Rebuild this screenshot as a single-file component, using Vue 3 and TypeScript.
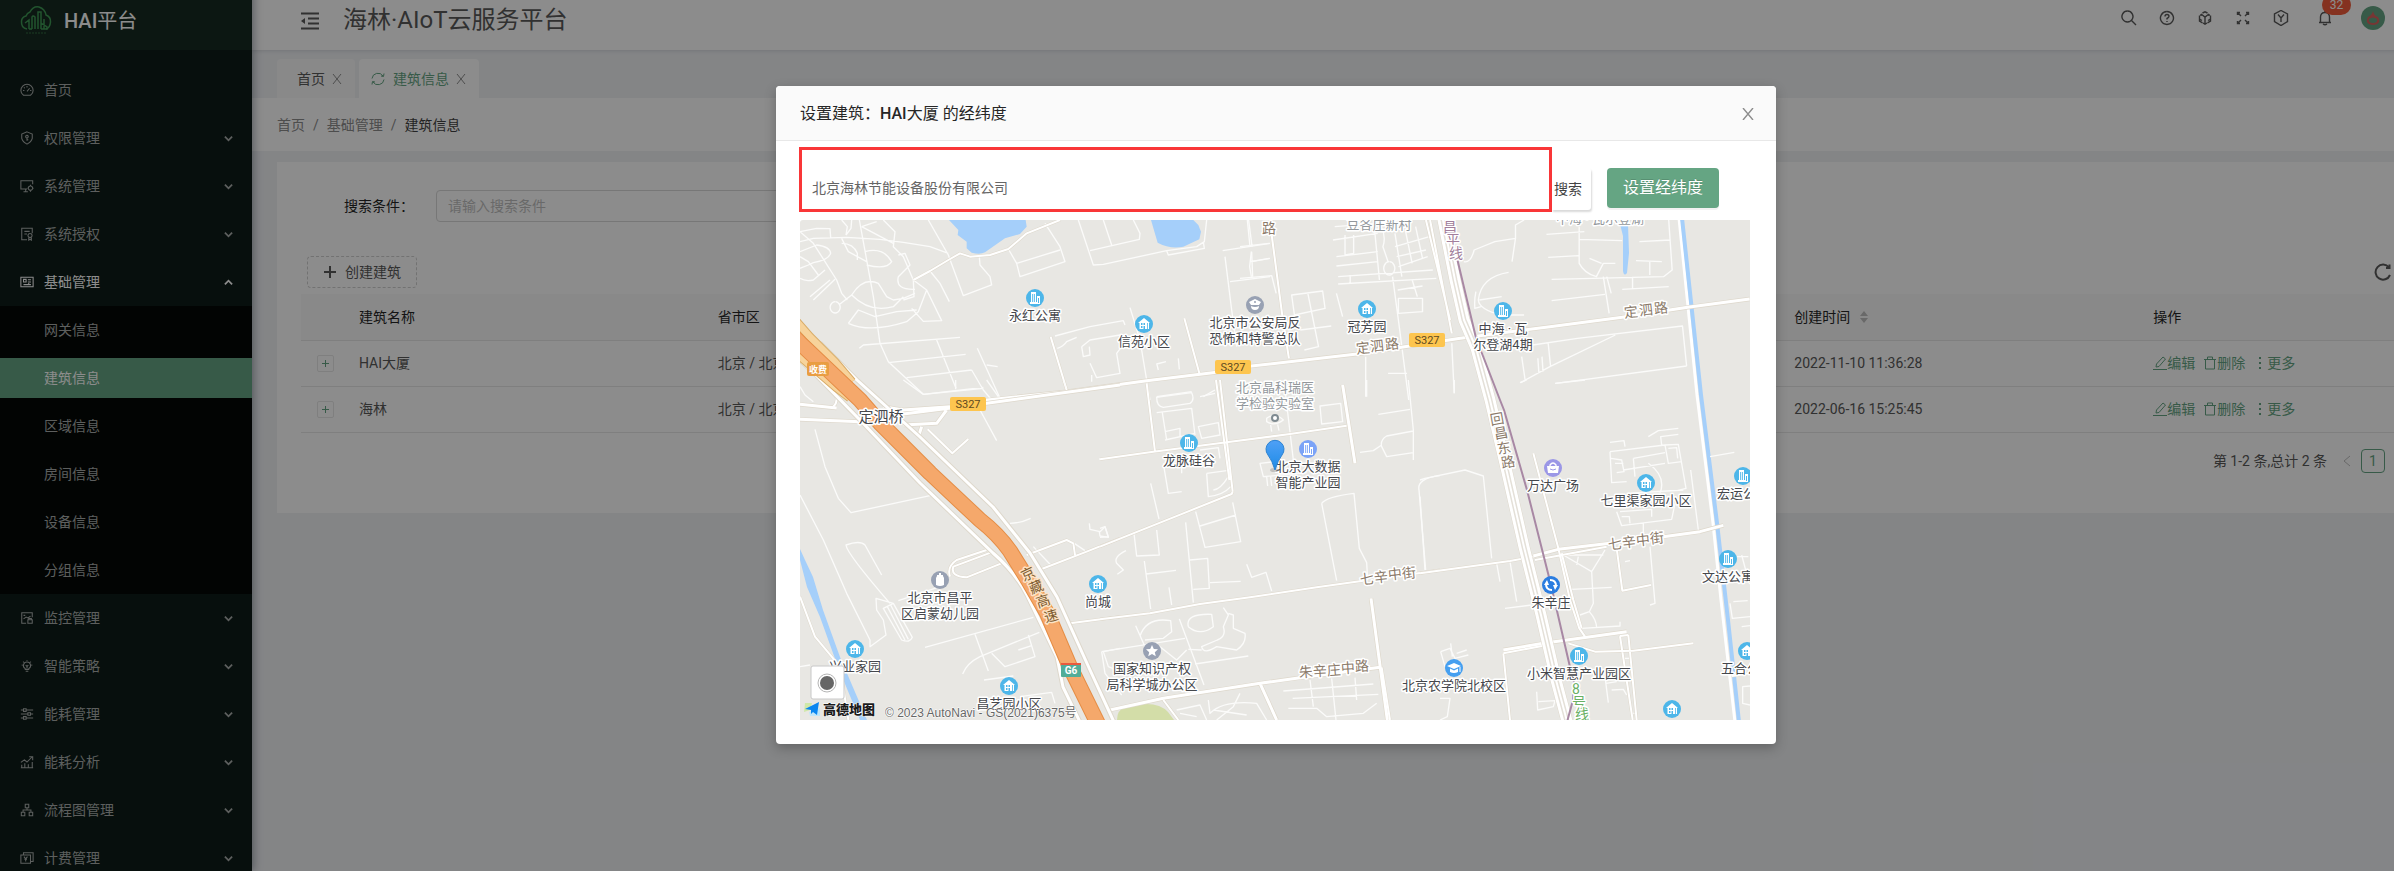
<script setup lang="ts">
import { ref } from 'vue'

interface MenuItem { label: string; icon: string; arrow: boolean; open?: boolean; children?: string[] }
interface Poi { x: number; y: number; kind: string; color: string; lines: string[] }
interface RoadName { color: string; halo: string; chars: [string, number, number, number][] }
interface Tile { transform: string; minor: string; medium: string; major: string }

const menu: MenuItem[] = [
  { label: '首页', icon: 'M4 14 Q1 12 1 8.500 A7 7 0 0 1 15 8.500 Q15 12 12 14 Z M8 9.500 L11 6 M3.500 8.500 H5 M11.500 8.500 H13 M4.500 5 L5.500 6 M8 3.500 V5', arrow: false },
  { label: '权限管理', icon: 'M8 1 L14 3.500 V8.500 Q13 12.500 8 15 Q3 12.500 2 8.500 V3.500 Z M8 5 A1.500 1.500 0 1 1 7.900 5 M8 8 V11 M8 10 H9.500', arrow: true },
  { label: '系统管理', icon: 'M8 11.500 H1 V2 H14.500 V6 M4 14.500 H9 M6.500 11.500 V14.500 M12 8 A2.500 2.500 0 1 1 11.900 8 M12 6.500 V8 M12 13 V14.500 M8.500 10.500 H9.500 M14.500 10.500 H15.500', arrow: true },
  { label: '系统授权', icon: 'M8 14.500 H2 V1.500 H14 V7 M5 5 H11 M5 8 H8 M11.500 7.500 A2.300 2.300 0 1 1 11.400 7.500 M10 12 V15 L11.500 14 L13 15 V12', arrow: true },
  {
    label: '基础管理', icon: 'M1 2.500 H15 V13.500 H1 Z M4 5 H7 V8 H4 Z M9 5.500 H12.500 M9 8 H12.500 M4 11 H12.500 M10 9 V11', arrow: true, open: true,
    children: ['网关信息', '建筑信息', '区域信息', '房间信息', '设备信息', '分组信息'],
  },
  { label: '监控管理', icon: 'M7 14 H2 V2 H14 V7 M4 5 H6 M4 9 L7 7 L9 8 L12 6 M9 10 H14 V14 H9 Z M10 10 V8.500 H13 V10', arrow: true },
  { label: '智能策略', icon: 'M8 3.500 A4 4 0 0 1 10 11 V12 H6 V11 A4 4 0 0 1 8 3.500 M6.500 14 H9.500 M8 8 V11 M6.500 7 L8 8.500 L9.500 7 M8 1 V2 M2 7 H3 M13 7 H14 M3.500 3 L4.500 4 M12.500 3 L11.500 4', arrow: true },
  { label: '能耗管理', icon: 'M1 3.500 H4 M7 3.500 H15 M4 2 H7 V5 H4 Z M1 8 H9 M12 8 H15 M9 6.500 H12 V9.500 H9 Z M1 12.500 H4 M7 12.500 H15 M4 11 H7 V14 H4 Z', arrow: true },
  { label: '能耗分析', icon: 'M1 8.500 L5 5.500 L8 8 L14 2 M10.500 2 H14.500 V6 M2 14 V11 M5.500 14 V9.500 M9.500 14 V10.500 M14 14 V8 M1 14.500 H15', arrow: true },
  { label: '流程图管理', icon: 'M6 1.500 H10 V5.500 H6 Z M1.500 10.500 H5.500 V14.500 H1.500 Z M10.500 10.500 H14.500 V14.500 H10.500 Z M8 5.500 V8 M3.500 10.500 V8 H12.500 V10.500', arrow: true },
  { label: '计费管理', icon: 'M1 4.500 H12 V14 H1 Z M4 4.500 V2 H15 V12 H12 M4.500 6.500 L6.500 9 L8.500 6.500 M6.500 9 V12 M5 9.500 H8', arrow: true },
]

const activeChild = '建筑信息'
const headerIcons = [
  { name: '搜索', d: 'M6.500 1 A5.500 5.500 0 1 1 6.400 1 M10.500 10.500 L15 15' },
  { name: '帮助', d: 'M8 1.500 A6.500 6.500 0 1 1 7.900 1.500 M6 6.500 Q6 4.500 8 4.500 Q10 4.500 10 6.300 Q10 7.500 8 8.500 V9.500 M8 11 V12' },
  { name: '组件', d: 'M5.500 3 L8 1.800 L10.500 3 M13.500 5.500 V11 L10.500 12.800 M5.500 12.800 L2.500 11 V5.500 M4 4 L8 7 L12 4 M8 7 V14 M2.500 9 L5 10.500 M13.500 9 L11 10.500 M6 13 L8 14.200 L10 13 M4 4 V6 M12 4 V6' },
  { name: '全屏', d: 'M2.500 5 V2.500 H5 M2.500 2.500 L6 6 M11 2.500 H13.500 V5 M13.500 2.500 L10 6 M2.500 11 V13.500 H5 M2.500 13.500 L6 10 M13.500 11 V13.500 H11 M13.500 13.500 L10 10' },
  { name: '空间', d: 'M8 0.500 L14.500 4 V11.500 L8 15.500 L1.500 11.500 V4 Z M5 4.500 L8 8 L11 4.500 M8 8 V12' },
]

const rows = [
  { name: 'HAI大厦', region: '北京 / 北京市', time: '2022-11-10 11:36:28' },
  { name: '海林', region: '北京 / 北京市', time: '2022-06-16 15:25:45' },
]

const address = ref('北京海林节能设备股份有限公司')
const keyword = ref('')

const tiles: Tile[] = [
  {
    transform: 'translate(-30 -140) scale(.33333)',
    minor: 'M90 485 L130 475 230 472 330 478 400 487 480 500 535 520 M90 455 L140 445 180 446 182 472 M215 420 L232 440 228 465 M245 420 L243 445 228 465 M90 455 L130 490 200 600 215 640 232 660 M90 515 L140 495 Q180 500 182 520 Q175 540 130 548 L115 555 90 565 M90 530 L115 545 145 585 M90 595 Q105 605 130 600 L165 570 M120 650 L180 600 M130 660 L195 598 M268 420 L290 540 310 650 330 790 355 845 460 943 M275 440 L320 425 M275 440 L370 490 M340 420 L375 455 370 500 400 530 430 600 M215 475 L235 515 290 545 M215 490 Q250 490 262 520 V540 M285 515 Q340 500 365 545 Q350 570 290 555 M195 665 a15 17 0 1 0 1 0 M210 672 L245 645 Q280 590 325 610 L350 650 370 660 400 655 435 640 M245 645 Q300 700 370 680 L400 650 M235 730 L265 690 315 710 380 695 440 690 M235 730 Q300 760 410 725 L445 695 M385 525 L405 520 420 555 385 590 Q375 630 435 628 M430 600 L432 650 400 660 M430 600 L470 630 515 722 460 724 425 685 M470 630 L445 695 M475 420 L535 525 580 647 665 615 660 590 630 555 628 530 M480 573 L510 610 538 665 M715 507 L740 550 750 590 885 545 870 500 825 430 M740 550 L870 510 M925 420 L970 555 1000 553 1190 512 1280 500 1303 485 1310 420 M960 512 L1108 478 1110 460 1090 420 M1000 420 L1025 495 M1190 512 L1195 525 1303 505 1300 485 M1432 420 L1440 500 M1358 512 L1500 490 M1365 530 L1385 690 1400 800 M1445 515 L1448 590 M1380 605 L1500 590 M1445 545 L1500 535 M268 805 L280 795 570 772 M355 848 L587 823 M410 893 L605 870 M460 943 L640 922 M500 780 L558 925 M605 870 L640 930 665 960 M622 805 L690 955 M650 855 L683 860 M855 768 L960 740 1060 722 1065 735 M1080 683 L1110 780 1130 900 1140 960 M862 805 Q880 800 890 785 L920 772 M935 800 L960 780 1050 765 1055 800 1040 820 1050 880 980 893 960 850 M935 800 L940 830 960 825 958 800 M1160 850 L1165 870 M1160 852 L1188 845 M1225 835 L1228 868 M965 885 V905 M1160 950 L1265 935 M1300 950 L1335 930',
    medium: 'M430 600 L480 573 535 540 570 520 600 530 660 525 715 507 L770 460 870 420 M842 770 L890 930 M1243 715 L1288 880',
    major: 'M560 970 L890 935 1130 902 1340 877 1430 866',
  },
  {
    transform: 'translate(440 -140) scale(.34435 .33333)',
    minor: 'M25 420 L35 500 M0 500 L85 490 M33 515 L28 560 33 590 M0 595 L92 587 105 640 M30 545 L85 535 M150 645 L240 633 247 685 158 705 Z M197 640 L228 800 187 810 M175 750 L265 738 M280 640 L298 710 M275 440 L400 430 M305 465 V525 L330 520 V465 M270 480 L400 460 M280 530 L400 515 M280 558 L400 545 M285 590 L560 570 M285 612 L570 595 M390 440 L405 600 M410 440 Q425 470 415 500 L430 545 M433 545 a16 20 0 1 0 1 0 M450 460 L470 590 M480 450 L500 550 M510 440 L530 535 M450 500 L550 470 M455 530 L540 510 M460 560 L545 530 M443 590 L460 720 490 960 M320 585 V612 M458 630 L530 618 M460 655 H530 V695 L460 700 Z M500 600 L515 650 M365 830 V950 M430 880 H485 M615 790 L622 940 M650 545 Q670 550 680 510 L740 485 800 475 V435 L825 420 M800 475 L790 545 M780 577 Q700 590 692 660 Q695 690 760 705 L825 705 M685 635 Q680 660 682 685 L700 680 M695 660 L760 650 M890 463 L1000 455 M985 440 L985 550 Q1000 580 1035 590 L1055 550 1090 550 M985 478 L1110 482 M895 532 L983 527 M905 598 L1230 590 1255 570 1245 420 M1055 590 L1072 700 M1065 590 L1078 640 M905 662 L1060 643 M1110 628 L1245 620 M1140 590 V628 M1015 535 L1050 550 M1150 542 L1225 545 M1190 545 V585 M1160 485 L1250 480 M815 908 L900 860 1090 765 M850 795 L980 775 1285 738 1297 858 M917 910 L1297 858 M818 830 L828 900 M895 790 L902 860 M865 835 L868 880 M877 830 L880 875',
    medium: 'M92 465 L122 700 142 835 M540 420 L610 720 M552 420 L615 760 M297 915 L305 960',
    major: 'M-60 872 L0 862 340 822 640 775 900 740 1110 712 1300 682 1480 657',
  },
  {
    transform: 'translate(-20 160) scale(.33333)',
    minor: 'M105 148 L135 260 175 355 213 398 450 347 M60 345 L130 480 200 640 270 780 V800 L318 765 310 720 290 690 288 655 340 670 M305 585 L255 495 Q240 480 198 495 Q200 520 330 670 M355 662 L480 620 M310 685 L365 780 Q390 790 397 772 L340 670 Z M322 680 L375 780 M332 675 L385 778 M435 802 L760 712 M548 882 Q560 850 600 830 L778 757 M585 763 L625 873 M635 820 L675 860 765 830 745 765 M715 810 L755 797 M612 900 L700 888 M690 430 Q720 430 752 415 M600 90 L650 182 M957 237 L1020 230 M370 0 L430 43 610 25 M620 0 L655 50 M527 0 V28 M850 0 L860 28 M928 430 L930 448 960 455 975 440 985 472 960 468 958 455 M760 500 L810 553 M875 485 L915 512 M970 815 L1020 805 M970 815 L985 860 1020 875 M720 950 L815 937 825 970 M60 860 L90 855 M60 20 L75 45 100 65',
    medium: 'M60 650 L105 770 180 860 205 1020 M443 148 L517 220 565 177 M785 567 L920 515 1020 475 M870 730 L1020 710 M740 525 L860 480 880 490 885 525 M670 548 L560 592 Q510 590 520 560 L640 515 M620 510 L530 540 Q500 560 510 590 M160 80 Q180 60 160 30',
    major: 'M60 73 L170 84 M60 118 L240 125 M310 80 L370 90 510 80 M370 135 L470 130 500 90 M425 140 L415 170 M370 102 L560 78 1020 15',
  },
  {
    transform: 'translate(300 160) scale(.33333)',
    minor: 'M170 52 Q170 80 190 82 L270 70 Q285 60 275 38 L185 50 Z M170 98 L275 85 285 165 M187 98 L200 180 M195 155 L240 145 V170 M195 180 L285 160 M300 50 L345 40 M295 140 L355 128 360 165 305 175 Z M190 250 L205 340 245 335 M320 280 L380 272 M320 280 L325 350 Q370 345 392 320 M340 330 Q360 330 385 290 M300 210 L355 203 360 235 M245 250 V280 M152 310 L177 417 M555 30 L580 240 M525 245 L480 250 L490 290 620 278 M500 290 L503 318 M512 290 L515 318 M500 115 Q525 95 550 120 Q525 140 500 125 Z M512 135 L515 155 M533 133 L537 152 M660 78 L722 70 728 125 665 132 Z M800 0 V50 M835 103 L930 88 M925 0 L940 150 V240 M940 153 L860 168 Q840 180 845 200 L860 230 940 218 M780 217 L820 212 845 195 M665 370 Q680 350 762 340 L778 505 800 548 803 600 M665 370 L710 602 M1020 287 Q950 295 957 330 L977 570 M102 460 L110 528 178 525 170 450 M257 427 L280 668 M270 540 L323 535 328 625 280 628 M330 608 L422 604 M300 438 L408 405 M287 395 L315 502 422 485 398 367 M133 543 L152 687 M138 582 L228 571 M207 622 L215 675 M78 512 Q40 530 50 550 L70 570 52 583 M440 553 L455 592 498 577 515 633 M0 445 L15 440 25 470 0 472 M107 737 L135 800 M120 768 Q140 710 212 722 L215 755 190 775 135 780 M5 815 L255 775 M238 717 L312 915 M265 740 Q255 700 335 703 L340 740 Q300 770 265 740 M370 683 L385 705 370 740 Q380 770 352 780 L305 800 Q310 825 350 800 L410 810 Q440 790 435 760 L400 745 V705 L385 700 M5 815 L15 880 65 945 M265 808 L305 810 M285 852 L445 828 M180 800 L230 840 260 810 M230 990 L300 975 320 1020 M325 960 L330 1000 Q370 960 470 970 L500 1020 M340 990 L440 1005 M550 933 L820 912 M578 955 L835 943 M630 900 L640 980 M695 895 L708 1020 M765 893 L770 960 M565 985 L650 985 680 1010 790 1000 830 970 M240 1000 L290 1010 M350 1020 L400 980 420 940',
    medium: 'M140 10 L165 215 M348 0 L388 300 M360 0 L398 335 M0 500 L250 400 395 342 398 335 M0 238 L160 215 380 187 570 162 740 137 M0 718 L150 700 300 672 450 652 650 622 790 602 M940 582 L1020 570 M845 862 L870 1020 M190 960 L235 1020',
    major: 'M728 15 L765 250 M813 655 L862 1020 M30 990 L190 955 480 910 600 893 840 862 M480 910 L530 1020',
  },
  {
    transform: 'translate(620 160) scale(.33333)',
    minor: 'M0 300 L15 295 135 270 190 288 215 535 M0 350 L15 570 M430 525 L515 575 555 510 M430 525 H550 M475 530 L470 555 M515 575 L520 670 508 695 480 705 M455 628 L575 622 M508 695 Q530 720 530 745 M485 745 L600 738 V725 M690 500 L705 670 690 675 M812 270 L835 450 M870 230 L943 217 M230 550 L240 605 M270 545 L290 665 M255 685 L335 675 M610 835 H630 M635 1000 H650 M62 815 L90 805 105 835 145 825 M62 815 L75 860 M92 790 L97 830 M60 955 H90 L82 1010 60 1020 M110 820 L140 810 M350 935 L353 990 400 980 405 962 355 965 M555 890 L565 968 M558 910 L590 905 M575 930 L610 928 620 945 M570 215 L735 195 775 193 798 325 760 335 M570 215 L575 308 620 305 M573 235 L605 240 612 275 590 278 M585 250 H610 M640 235 L645 290 M640 235 L735 218 M735 195 L745 250 785 245 M745 205 L770 203 773 235 M685 250 Q740 290 720 340 M610 270 L735 250 M590 395 L605 437 755 418 765 370 M605 410 L628 410 630 430 M600 395 L695 388 V410 M670 430 V465 M725 195 L722 170 775 163 M685 170 L715 152 775 145 M570 187 L612 182 615 200 M620 340 L790 330 M930 670 L937 715 990 710 M940 665 L983 662 M950 530 H985 M965 525 L985 600 M965 740 L990 737 M990 918 L968 920 V970 L990 975 M405 10 L495 0 M103 0 V40 M300 8 L320 0 M615 545 L630 542',
    medium: 'M0 580 L270 543 340 530 M345 540 L560 500 M340 220 L415 505 M415 505 L450 660 478 745 495 770 M425 520 L460 660 485 745 M590 505 L607 632 693 615 M445 790 L525 815 640 812 820 790 M600 768 L638 1020 M625 765 L650 1020 M600 768 L625 765 M935 888 L990 880 M250 820 L270 1020 M250 820 L370 797',
    major: 'M340 528 L415 508 570 490 M730 470 L840 455 910 436 M250 810 L370 790 620 755',
  },
]

const blue = '#4db6e9'
const gray = '#98a1b3'
const pois: Poi[] = [
  { x: 235, y: 78, kind: 'tower', color: blue, lines: ['永红公寓'] },
  { x: 344, y: 104, kind: 'house', color: blue, lines: ['信苑小区'] },
  { x: 455, y: 85, kind: 'police', color: gray, lines: ['北京市公安局反', '恐怖和特警总队'] },
  { x: 567, y: 89, kind: 'house', color: blue, lines: ['冠芳园'] },
  { x: 703, y: 91, kind: 'tower', color: blue, lines: ['中海 · 瓦', '尔登湖4期'] },
  { x: 140, y: 360, kind: 'bottle', color: gray, lines: ['北京市昌平', '区启蒙幼儿园'] },
  { x: 298, y: 364, kind: 'house', color: blue, lines: ['尚城'] },
  { x: 55, y: 429, kind: 'house', color: blue, lines: ['兴业家园'] },
  { x: 209, y: 466, kind: 'house', color: blue, lines: ['昌艺园小区'] },
  { x: 389, y: 223, kind: 'tower', color: blue, lines: ['龙脉硅谷'] },
  { x: 508, y: 229, kind: 'tower', color: '#7ba3f7', lines: ['北京大数据', '智能产业园'] },
  { x: 352, y: 431, kind: 'star', color: gray, lines: ['国家知识产权', '局科学城办公区'] },
  { x: 654, y: 448, kind: 'school', color: '#459ff0', lines: ['北京农学院北校区'] },
  { x: 753, y: 248, kind: 'bag', color: '#9b97e6', lines: ['万达广场'] },
  { x: 846, y: 263, kind: 'house', color: blue, lines: ['七里渠家园小区'] },
  { x: 943, y: 256, kind: 'tower', color: blue, lines: ['宏运公寓'] },
  { x: 751, y: 365, kind: 'metro', color: '#2b7de0', lines: ['朱辛庄'] },
  { x: 928, y: 339, kind: 'tower', color: blue, lines: ['文达公寓'] },
  { x: 947, y: 431, kind: 'house', color: blue, lines: ['五合公寓'] },
  { x: 779, y: 436, kind: 'tower', color: blue, lines: ['小米智慧产业园区'] },
  { x: 872, y: 489, kind: 'house', color: blue, lines: [] },
]

const brown = '#8c7b6b'
const roadNames: RoadName[] = [
  { color: brown, halo: '#fff', chars: [['路', 469, 8, 0]] },
  { color: brown, halo: '#fff', chars: [['定', 563, 128, -6], ['泗', 577, 126, -6], ['路', 592, 124, -6]] },
  { color: brown, halo: '#fff', chars: [['定', 831, 92, -6], ['泗', 846, 90, -6], ['路', 861, 88, -6]] },
  { color: '#a27f9c', halo: '#fff', chars: [['昌', 650, 7, 0], ['平', 653, 20, 0], ['线', 656, 33, 0]] },
  { color: '#7d5c30', halo: '#fde3c4', chars: [['京', 228, 354, -25], ['藏', 236, 367, -22], ['高', 243, 381, -18], ['速', 251, 396, -16]] },
  { color: brown, halo: '#fff', chars: [['七', 567, 359, -6], ['辛', 581, 357, -6], ['中', 595, 354, -6], ['街', 609, 353, -6]] },
  { color: brown, halo: '#fff', chars: [['朱', 506, 452, -4], ['辛', 520, 451, -4], ['庄', 534, 450, -4], ['中', 548, 448, -4], ['路', 562, 446, -4]] },
  { color: brown, halo: '#fff', chars: [['回', 697, 199, -10], ['昌', 701, 213, -10], ['东', 704, 228, -10], ['路', 708, 242, -10]] },
  { color: brown, halo: '#fff', chars: [['七', 815, 324, -6], ['辛', 829, 322, -6], ['中', 843, 320, -6], ['街', 857, 318, -6]] },
  { color: '#69b064', halo: '#fff', chars: [['8', 776, 469, 0], ['号', 779, 482, 0], ['线', 782, 494, 0]] },
]

const shields: [number, number][] = [[433, 147], [627, 120], [168, 184]]
const highway = 'M-6 117 L0 123 L60 180 L80 203 L130 253 L180 300 Q198 314 210 331 L228 360 L247 393 L270 447 L300 508'
const avenue = 'M642 -5 L655 60 L664 100 L676 128 L690 180 L706 248 L724 327 L741 395 L756 460 L768 505'
</script>

<template>
  <div class="viewport">
    <div class="shell">
      <aside class="sidebar">
        <div class="brand">
          <svg class="brand-mark" viewBox="0 0 32 32">
            <path d="M7 24 Q1 23 1.500 16 Q2 12 6 11 Q7 8 10 7 Q13 1 19 2 Q25 4 26 10 Q31 12 30.500 17 Q30 23 26 24" />
            <path d="M9 24 V15 L5 18 M9 24 H12 M12 24 V12 Q13 10 15 12 V24 M18 24 V7 H21 V24 M24 24 V14 M21 18 L27 22 V24 H21" />
            <path d="M6 28 H27" stroke-dasharray="2 1" stroke-width="1" opacity=".6" />
          </svg>
          <h1><b>HAI</b>平台</h1>
        </div>
        <nav class="menu">
          <template v-for="item in menu" :key="item.label">
            <a href="#" class="menu-item" :class="{ open: item.open }">
              <svg viewBox="0 0 16 16" class="menu-icon"><path :d="item.icon" /></svg>
              <span>{{ item.label }}</span>
              <svg v-if="item.arrow" viewBox="0 0 10 10" class="menu-arrow">
                <path :d="item.open ? 'M1 7 L5 3 L9 7' : 'M1 3 L5 7 L9 3'" />
              </svg>
            </a>
            <div v-if="item.children" class="submenu">
              <a v-for="child in item.children" :key="child" href="#" :class="{ active: child === activeChild }">{{ child }}</a>
            </div>
          </template>
        </nav>
      </aside>

      <div class="main">
        <header class="topbar">
          <button class="icon-button fold" aria-label="收起菜单">
            <svg viewBox="0 0 18 18" class="fold-icon"><path d="M0 1.500 H18 M7 6.500 H18 M7 11.500 H18 M0 16.500 H18" /><path d="M0 9 L4 6 V12 Z" class="solid" /></svg>
          </button>
          <h2>海林·AIoT云服务平台</h2>
          <div class="tools">
            <button v-for="icon in headerIcons" :key="icon.name" class="icon-button" :aria-label="icon.name">
              <svg viewBox="0 0 16 16" class="tool-icon"><path :d="icon.d" /></svg>
            </button>
            <button class="icon-button bell" aria-label="通知">
              <svg viewBox="0 0 16 16" class="tool-icon"><path d="M2 12.500 H14 M3.500 12.500 V7 Q3.500 2.500 8 2.500 Q12.500 2.500 12.500 7 V12.500 M8 1 V2.500 M6 14 Q8 15.500 10 14" /></svg>
              <span class="badge">32</span>
            </button>
            <span class="avatar">
              <svg viewBox="0 0 24 24"><path d="M12 5 Q11 9 7 11 Q3 18 12 19 Q21 18 17 11 Q13 10 12 5 Z" /><path d="M8 13 Q12 10 16 13 Q17 17 12 17 Q7 17 8 13 Z" class="face" /></svg>
            </span>
            <span>超级管理员</span>
          </div>
        </header>

        <div class="tabs">
          <div class="tab">首页<button class="tab-close" aria-label="关闭首页"><svg viewBox="0 0 10 10"><path d="M1 0 L9 10 M9 0 L1 10" /></svg></button></div>
          <div class="tab current">
            <svg viewBox="0 0 14 14" class="sync"><path d="M1 6.500 A6 6 0 0 1 12 4 M13 1.500 L12.500 4.500 L10 4 M13 7.500 A6 6 0 0 1 2 10 M1 12.500 L1.500 9.500 L4 10" /></svg>
            建筑信息<button class="tab-close" aria-label="关闭建筑信息"><svg viewBox="0 0 10 10"><path d="M1 0 L9 10 M9 0 L1 10" /></svg></button>
          </div>
        </div>

        <nav class="crumbs"><a href="#">首页</a><i>/</i><a href="#">基础管理</a><i>/</i><span>建筑信息</span></nav>

        <section class="card">
          <form class="filter" @submit.prevent>
            <label for="keyword">搜索条件：</label>
            <input id="keyword" v-model="keyword" type="text" placeholder="请输入搜索条件" />
          </form>
          <div class="toolbar">
            <button class="create"><svg viewBox="0 0 12 12"><path d="M6 0 V12 M0 6 H12" /></svg>创建建筑</button>
            <button class="icon-button reload" aria-label="刷新">
              <svg viewBox="0 0 18 18"><path d="M15 4.500 A7.500 7.500 0 1 0 16 12 M15.500 1.500 V5 H12" /></svg>
            </button>
          </div>
          <table>
            <colgroup><col class="narrow" /><col /><col /><col /><col /><col /><col /></colgroup>
            <thead>
              <tr>
                <th></th><th>建筑名称</th><th>省市区</th><th></th><th></th>
                <th><span class="sortable">创建时间<svg viewBox="0 0 8 12"><path d="M4 0 L8 5 H0 Z M0 7 H8 L4 12 Z" /></svg></span></th>
                <th>操作</th>
              </tr>
            </thead>
            <tbody>
              <tr v-for="row in rows" :key="row.name">
                <td><button class="expand" :aria-label="'展开' + row.name"><svg viewBox="0 0 7 7"><path d="M3.500 0 V7 M0 3.500 H7" /></svg></button></td>
                <td>{{ row.name }}</td>
                <td>{{ row.region }}</td>
                <td></td>
                <td></td>
                <td>{{ row.time }}</td>
                <td>
                  <div class="actions">
                    <a href="#"><svg viewBox="0 0 14 14"><path d="M0 13.500 H14 M3 11 L3.500 8 L10 1 L12.500 3 L6 10.500 Z" /></svg>编辑</a>
                    <a href="#"><svg viewBox="0 0 14 14"><path d="M1 3.500 H13 M4.500 3.500 V1 H9.500 V3.500 M2.500 3.500 V13 H11.500 V3.500" /></svg>删除</a>
                    <a href="#"><svg viewBox="0 0 14 14" class="dots"><path d="M6 1 h2 v2 h-2 Z M6 6 h2 v2 h-2 Z M6 11 h2 v2 h-2 Z" /></svg>更多</a>
                  </div>
                </td>
              </tr>
            </tbody>
          </table>
          <div class="pager">
            <span>第 1-2 条,总计 2 条</span>
            <button class="prev" aria-label="上一页"><svg viewBox="0 0 8 12"><path d="M7 1 L1 6 L7 11" /></svg></button>
            <button class="page">1</button>
          </div>
        </section>
      </div>

      <div class="mask">
        <div class="dialog" role="dialog" aria-labelledby="dialog-title">
          <div class="dialog-head">
            <h3 id="dialog-title">设置建筑：<b>HAI</b>大厦 的经纬度</h3>
            <button class="icon-button" aria-label="关闭"><svg viewBox="0 0 12 12"><path d="M1 0 L11 12 M11 0 L1 12" /></svg></button>
          </div>
          <div class="dialog-body">
            <div class="locate">
              <div class="frame"><input v-model="address" type="text" aria-label="地址" /></div>
              <button class="find">搜索</button>
              <button class="apply">设置经纬度</button>
            </div>
            <div class="map">
              <svg viewBox="0 0 950 500" class="canvas">
                <rect width="950" height="500" fill="#e8e7e3" />
                <g fill="#a5cffa">
                  <g transform="translate(-30 -140) scale(.33333)">
                    <path d="M537 420 L565 450 563 465 590 485 V505 L605 518 Q630 525 645 517 L705 475 750 462 770 440 767 420 Z" />
                    <path d="M1143 420 L1163 488 Q1200 508 1240 500 L1288 478 1293 455 1285 435 1270 420 Z" />
                  </g>
                  <path d="M0 329 L5 340 L13 357 L23 390 L40 437 L67 500 H60 L38 447 L20 397 L7 367 L0 340 Z" />
                  <path d="M819 0 L828 4 L829 33 L827 53 Q824 57 823 51 V16 Z" />
                </g>
                <path d="M317 500 Q317 490 325 487 L343 484 Q360 483 368 492 L374 500 Z" fill="#d3dda8" />

                <path d="M879 -2 L897 175 L913 303 L921 380 L935 502" class="line" stroke="#fff" stroke-width="3" />
                <path d="M882 -2 L901 175 L917 303 L928 400 L939 502" class="line" stroke="#a5cffa" stroke-width="4" />

                <g v-for="tile in tiles" :key="tile.transform" :transform="tile.transform" class="line">
                  <path :d="tile.minor" stroke="#fbfbfa" stroke-width="4" />
                  <path :d="tile.medium" stroke="#ded8cc" stroke-width="9" />
                  <path :d="tile.major" stroke="#ded8cc" stroke-width="13" />
                  <path :d="tile.medium" stroke="#fff" stroke-width="6" />
                  <path :d="tile.major" stroke="#fff" stroke-width="9" />
                </g>

                <g class="line">
                  <path :d="avenue" stroke="#ded8cc" stroke-width="12" />
                  <path :d="avenue" stroke="#fff" stroke-width="11" />
                  <path :d="avenue" stroke="#e4e0d8" stroke-width="5" />
                  <path :d="avenue" stroke="#fff" stroke-width="2" />
                  <path d="M657 38 L676 118 L700 180 L704 190 L727 270 L751 365 L770 447 L774 462 L773 480 L767 502" stroke="#a888a4" stroke-width="2" />
                  <g stroke="#ded8cc" stroke-width="5">
                    <path d="M0 140 L17 156 L60 200 L120 263 L193 333 Q215 352 227 375 L257 437 L263 467 L280 502" />
                    <path d="M20 123 L57 160 L120 217 L193 287 L230 333 L257 377 L290 450 L314 502" />
                  </g>
                  <g stroke="#fff" stroke-width="3">
                    <path d="M0 140 L17 156 L60 200 L120 263 L193 333 Q215 352 227 375 L257 437 L263 467 L280 502" />
                    <path d="M20 123 L57 160 L120 217 L193 287 L230 333 L257 377 L290 450 L314 502" />
                  </g>
                  <path d="M-4 101 L10 117 L35 142 L52 162 M-4 133 L37 168 L50 178" stroke="#d8ac68" stroke-width="9" />
                  <path d="M-4 101 L10 117 L35 142 L52 162 M-4 133 L37 168 L50 178" stroke="#f7d39b" stroke-width="7" />
                  <path :d="highway" stroke="#e58d45" stroke-width="16" />
                  <path :d="highway" stroke="#f5a86b" stroke-width="14" />
                </g>

                <g v-for="([x, y]) in shields" :key="x">
                  <rect :x="x - 18" :y="y - 7" width="36" height="14" rx="2" fill="#fdc54f" />
                  <text :x="x" :y="y + 4" class="shield">S327</text>
                </g>
                <rect x="7" y="142" width="22" height="14" rx="2" fill="#e99d42" />
                <text x="18" y="153" class="toll small">收费</text>
                <rect x="261" y="443" width="20" height="14" rx="1" fill="#52ad98" />
                <rect x="261" y="443" width="20" height="2" fill="#ea5a3e" />
                <text x="271" y="454" class="toll">G6</text>

                <template v-for="(road, r) in roadNames" :key="r">
                  <text
                    v-for="([ch, x, y, a], i) in road.chars" :key="i" class="road" :x="x" :y="y + 5"
                    :fill="road.color" :stroke="road.halo" :transform="`rotate(${a} ${x} ${y})`"
                  >{{ ch }}</text>
                </template>
                <text x="579" y="9" class="poi-name faded">豆各庄新村</text>
                <text x="800" y="3" class="poi-name faded">中海 · 瓦尔登湖</text>
                <text x="475" y="172" class="poi-name faded">北京晶科瑞医</text>
                <text x="475" y="188" class="poi-name faded">学检验实验室</text>
                <text x="81" y="202" class="poi-name bridge">定泗桥</text>
                <circle cx="475" cy="198" r="3" fill="#fff" stroke="#7f8b91" stroke-width="2" />

                <g v-for="(poi, p) in pois" :key="p">
                  <g :transform="`translate(${poi.x} ${poi.y})`" fill="#fff">
                    <circle r="9" :fill="poi.color" />
                    <g v-if="poi.kind === 'house'">
                      <path d="M0 -6 L6 -1 H5 V5 H-4.500 V-1 H-6 Z" />
                      <path d="M-3 -1 h1.500 v2 h-1.500 Z M-0.500 -1 h1.500 v2 h-1.500 Z M-3 2 h1.500 v2 h-1.500 Z M-0.500 2 h1.500 v3 h-1.500 Z M3 -1 v6 h.8 v-6 Z" :fill="poi.color" />
                    </g>
                    <g v-else-if="poi.kind === 'tower'">
                      <path d="M-4 -6 H1 V4 H2 V-2 H5 V6 H-5 V4 H-4 Z" />
                      <path d="M-2.800 -4 H-1.800 V4 H-2.800 Z M-0.800 -4 H0 V4 H-0.800 Z M3 0 H4 V5 H3 Z" :fill="poi.color" />
                    </g>
                    <g v-else-if="poi.kind === 'police'">
                      <path d="M-6 -3 L0 -6 L6 -3 L4 0 H-4 Z" />
                      <path d="M-4 1 Q0 3 4 1 Q4 5 0 5 Q-4 5 -4 1 Z" />
                      <circle cy="-3" r="1" :fill="poi.color" />
                    </g>
                    <path v-else-if="poi.kind === 'bottle'" d="M-1 -7 H1 V-5 H3 V-4 L4 -2 V5 Q0 7 -4 5 V-2 L-3 -4 V-5 H-1 Z" />
                    <path v-else-if="poi.kind === 'star'" d="M0 -6 L1.800 -2 L6 -1.700 L2.800 1.200 L3.800 5.300 L0 3 L-3.800 5.300 L-2.800 1.200 L-6 -1.700 L-1.800 -2 Z" />
                    <path v-else-if="poi.kind === 'school'" d="M0 -5 L7 -2 L0 1 L-7 -2 Z M-4 0.500 L0 2.500 L4 0.500 V4 Q0 6 -4 4 Z M5.500 -1 H6.500 V4 H5.500 Z" />
                    <g v-else-if="poi.kind === 'bag'">
                      <path d="M-6 -2 H6 L5 5 H-5 Z" />
                      <path d="M-3 -1 V-3 Q0 -7 3 -3 V-1" fill="none" stroke="#fff" stroke-width="1.300" />
                      <path d="M-3 1 Q0 3 3 1" fill="none" :stroke="poi.color" />
                    </g>
                    <g v-else-if="poi.kind === 'metro'">
                      <path d="M1 5 Q-5 5 -5 -1 M-1 -5 Q5 -5 5 1" fill="none" stroke="#fff" stroke-width="2" />
                      <path d="M-7 0 L-4 -5 L-2 0 Z M7 0 L4 5 L2 0 Z" />
                    </g>
                  </g>
                  <text v-for="(line, l) in poi.lines" :key="line" class="poi-name" :x="poi.x" :y="poi.y + 22 + l * 16">{{ line }}</text>
                </g>

                <ellipse cx="474" cy="250" rx="4" ry="2" fill="#999" opacity=".5" />
                <defs>
                  <linearGradient id="pin-fill" x1="0" y1="0" x2="0" y2="1"><stop offset="0" stop-color="#4fa0f6" /><stop offset="1" stop-color="#1d8be6" /></linearGradient>
                </defs>
                <path d="M475 250 Q472 240 468 235 A9 9 0 1 1 482 235 Q478 240 475 250 Z" fill="url(#pin-fill)" stroke="#2b82d2" stroke-width="1" />

                <rect x="11" y="446" width="33" height="33" rx="2" fill="#fff" stroke="#c8c8c8" />
                <circle cx="27" cy="463" r="9" fill="#fff" stroke="#b5b5b5" />
                <circle cx="27" cy="463" r="7" fill="#666" />
                <path d="M5 483 H12 L10 490 L4 492 Z" fill="#cfe8a8" />
                <path d="M9 492 L20 488 V496 H10 Z" fill="#bfe6fa" />
                <path d="M5 489 L19 482 L17 495 L13 492 L11 494 V490 Z" fill="#0a86f0" />
                <text x="23" y="494" class="vendor">高德地图</text>
                <text x="85" y="497" class="rights">© 2023 AutoNavi - GS(2021)6375号</text>
              </svg>
            </div>
          </div>
        </div>
      </div>
    </div>
  </div>
</template>

<style>
body { margin: 0; }
</style>

<style scoped>
* { box-sizing: border-box; }
.viewport {
  height: 100vh;
  overflow: hidden;
  display: flex;
  background: #f0f2f5;
  font: 14px/22px Roboto, "Noto Sans CJK SC", sans-serif;
  color: #595959;
}
.shell {
  position: relative;
  flex: none;
  display: flex;
  width: calc(100% + 158px);
  min-height: calc(100% + 14px);
  margin-top: -14px;
}
h1, h2, h3 { margin: 0; font-weight: 400; }
b { font-weight: 500; }
a { color: inherit; text-decoration: none; }
button, input { font: inherit; color: inherit; margin: 0; padding: 0; border: 0; background: none; outline: 0; }
svg { display: block; fill: none; stroke: currentColor; }

.sidebar { width: 252px; flex: none; background: #0e1c18; color: #a9aeac; box-shadow: 2px 0 8px rgba(0, 21, 41, .35); z-index: 1; }
.brand { display: flex; align-items: center; gap: 12px; height: 64px; padding: 6px 20px 0; background: #172b22; color: #fff; }
.brand h1 { font-size: 20px; line-height: 28px; }
.brand-mark { width: 32px; height: 32px; stroke: #3f9a55; stroke-width: 1.5; }
.menu { padding-top: 16px; }
.menu-item { display: flex; align-items: center; gap: 10px; height: 48px; padding: 0 19px 0 20px; }
.menu-item.open { color: #fff; }
.menu-icon { width: 14px; height: 14px; stroke-width: 1.2; }
.menu-arrow { width: 9px; height: 9px; margin-left: auto; stroke-width: 2; }
.submenu { display: flex; flex-direction: column; gap: 8px; padding: 4px 0; background: #050907; }
.submenu a { height: 40px; padding-left: 44px; line-height: 40px; }
.submenu .active { background: #65a583; color: #fff; }

.main { flex: 1; min-width: 0; }
.topbar { display: flex; align-items: center; height: 64px; padding-left: 49px; background: #fff; box-shadow: 0 1px 4px rgba(0, 21, 41, .12); position: relative; }
.topbar h2 { margin-left: 24px; padding-top: 4px; font-size: 24px; line-height: 32px; color: #595959; }
.icon-button { display: flex; cursor: pointer; }
.fold-icon { width: 18px; height: 18px; stroke-width: 2; }
.fold { padding-top: 6px; }
.solid { fill: currentColor; stroke: none; }
.tools { display: flex; align-items: center; gap: 22px; margin-left: auto; padding-right: 88px; }
.tool-icon { width: 16px; height: 16px; stroke-width: 1.4; }
.bell { position: relative; padding-left: 6px; }
.badge { position: absolute; left: 11px; top: -15px; min-width: 29px; height: 20px; border-radius: 10px; background: #f25c3b; color: #fff; font-size: 12px; line-height: 20px; text-align: center; }
.avatar { display: flex; width: 24px; height: 24px; margin-left: 6px; margin-right: -13px; border-radius: 12px; background: #65a583; }
.avatar svg { width: 24px; height: 24px; stroke: none; fill: #d9635f; }
.avatar .face { fill: #65a583; }

.tabs { display: flex; align-items: flex-end; gap: 4px; height: 48px; padding: 0 25px; }
.tab { display: flex; align-items: center; height: 39px; padding: 0 13px 0 20px; border-radius: 4px 4px 0 0; background: #fafafa; }
.tab.current { padding-left: 12px; background: #fff; color: #65a583; }
.tab-close { width: 10px; height: 10px; margin-left: 7px; color: #8c8c8c; }
.tab-close svg { width: 10px; height: 10px; }
.sync { width: 14px; height: 14px; margin-right: 8px; }
.crumbs { display: flex; gap: 8px; height: 53px; padding: 0 25px; align-items: center; background: #fff; color: #8c8c8c; }
.crumbs i { font-style: normal; }
.crumbs span { color: #434343; }

.card { margin: 11px 32px 0 25px; padding: 28px 24px 40px; background: #fff; }
.filter { display: flex; align-items: center; padding-left: 43px; }
.filter label { width: 92px; color: #262626; }
.filter input { width: 640px; height: 32px; padding: 0 11px; border: 1px solid #d9d9d9; border-radius: 4px; }
.filter input::placeholder { color: #bfbfbf; opacity: 1; }
.toolbar { display: flex; align-items: center; justify-content: space-between; margin: 34px 104px 6px 6px; }
.create { display: flex; align-items: center; gap: 9px; height: 32px; padding: 0 15px 0 16px; border: 1px dashed #d0d0d0; border-radius: 4px; }
.create svg { width: 12px; height: 12px; stroke-width: 2; }
.reload svg { width: 18px; height: 18px; stroke-width: 2; }
table { width: 100%; border-collapse: collapse; table-layout: fixed; }
.narrow { width: 42px; }
th, td { height: 46px; padding: 0 16px; border-bottom: 1px solid #e8e8e8; text-align: left; font-weight: 400; white-space: nowrap; }
th { background: #fafafa; color: #262626; }
.sortable { display: flex; align-items: center; gap: 10px; }
.sortable svg { width: 8px; height: 12px; fill: #bfbfbf; stroke: none; }
.expand { display: flex; align-items: center; justify-content: center; width: 17px; height: 17px; border: 1px solid #e8e8e8; border-radius: 2px; color: #65a583; }
.expand svg { width: 7px; height: 7px; }
.actions { display: flex; gap: 8px; color: #65a583; }
.actions a { display: flex; align-items: center; }
.actions svg { width: 14px; height: 14px; }
.actions .dots { fill: currentColor; stroke: none; }
.pager { display: flex; align-items: center; justify-content: flex-end; margin: 16px 111px 0 0; }
.prev { display: flex; justify-content: center; width: 34px; padding-left: 6px; color: #bfbfbf; }
.prev svg { width: 8px; height: 12px; }
.page { width: 24px; height: 24px; border: 1px solid #65a583; border-radius: 4px; color: #65a583; }

.mask { position: absolute; inset: 0; z-index: 2; display: flex; justify-content: center; align-items: flex-start; padding-top: 100px; background: rgba(0, 0, 0, .45); }
.dialog { width: 1000px; background: #fff; border-radius: 4px; box-shadow: 0 4px 12px rgba(0, 0, 0, .25); color: #434343; }
.dialog-head { display: flex; align-items: center; justify-content: space-between; height: 55px; padding: 2px 22px 0 24px; border-bottom: 1px solid #e8e8e8; border-radius: 4px 4px 0 0; background: #fafafa; }
.dialog-head h3 { font-size: 16px; line-height: 24px; color: #262626; }
.dialog-head svg { width: 12px; height: 12px; color: #8c8c8c; stroke-width: 1.4; }
.dialog-body { padding: 6px 26px 24px 24px; }
.locate { display: flex; align-items: flex-end; margin-left: -1px; padding-right: 31px; }
.frame { flex: 1; display: flex; align-items: flex-end; height: 65px; border: 3px solid #f93638; }
.frame input { width: 100%; height: 44px; padding: 0 10px; font-size: 14px; color: #666; }
.find { width: 39px; height: 42px; margin-bottom: 2px; padding-right: 8px; padding-left: 2px; border-radius: 0 3px 3px 0; box-shadow: 1px 2px 2px rgba(0, 0, 0, .15); white-space: nowrap; text-align: left; }
.apply { width: 112px; height: 40px; margin: 0 0 4px 16px; border-radius: 4px; background: #65a583; color: #fff; font-size: 16px; box-shadow: 0 2px 0 rgba(0, 0, 0, .05); text-shadow: 0 -1px 0 rgba(0, 0, 0, .12); }
.map { margin-top: 8px; overflow: hidden; border-radius: 3px 0 0 0; }
.canvas { width: 100%; height: auto; stroke: none; }
.line { fill: none; stroke-linejoin: round; stroke-linecap: butt; }
.canvas text { text-anchor: middle; paint-order: stroke; stroke-width: 3px; stroke-linejoin: round; }
.poi-name { font-size: 13px; fill: #45474c; stroke: #fff; }
.faded { fill: #93989c; }
.bridge { font-size: 15px; }
.road { font-size: 14px; }
.shield { font-size: 11px; fill: #5f4a21; stroke: none; }
.toll { font-size: 10px; font-weight: 700; fill: #fff; stroke: none; }
.toll.small { font-size: 9px; }
.canvas .vendor { font-size: 13px; font-weight: 900; fill: #1c1c1c; stroke: #fff; text-anchor: start; stroke-width: 1px; }
.canvas .rights { font-family: "Liberation Sans", "Noto Sans CJK SC", sans-serif; font-size: 12px; fill: #666; stroke: #fff; stroke-width: 1px; text-anchor: start; }
</style>
